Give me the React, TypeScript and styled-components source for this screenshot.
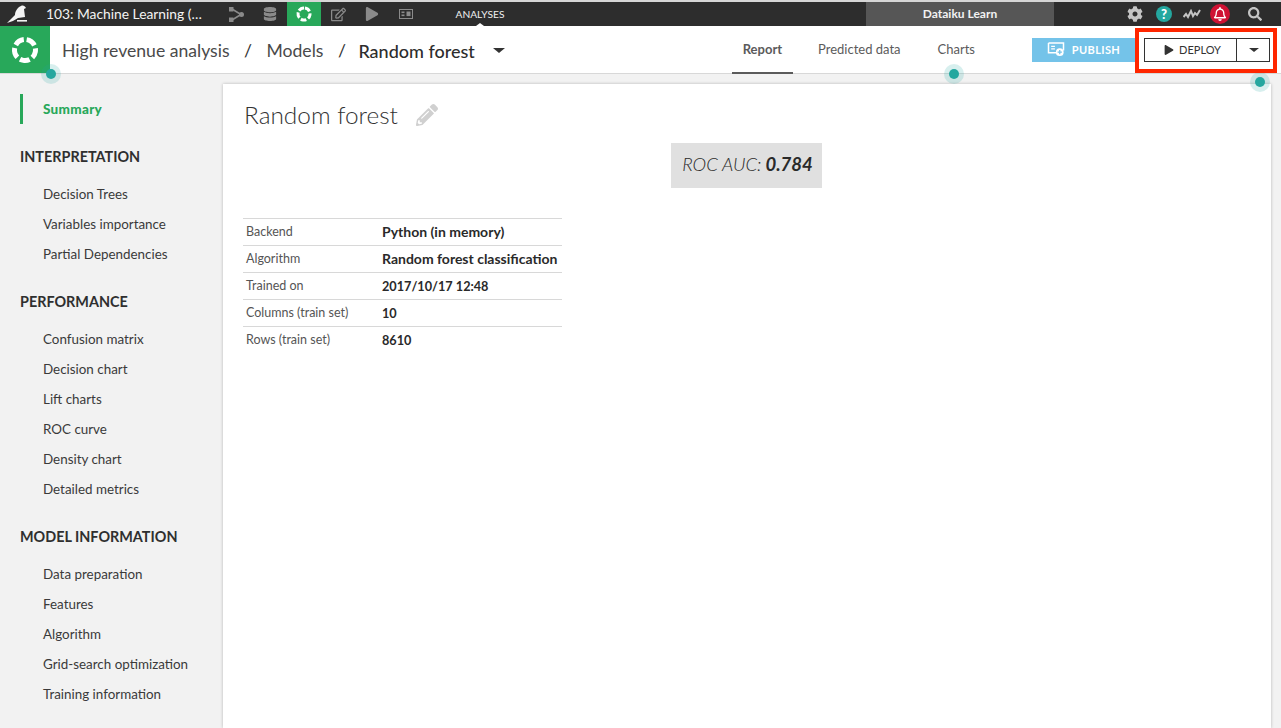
import React from "react";
import styled, { createGlobalStyle } from "styled-components";
import {
	FaCog,
	FaDatabase,
	FaPencilAlt,
	FaPlay,
	FaRegBell,
	FaRegEdit,
	FaSearch,
} from "react-icons/fa";

const GREEN = "#28a85a";
const TEAL = "#24a79f";
const TEXT = "#333333";

const GlobalStyle = createGlobalStyle`
  html, body {
    margin: 0;
    padding: 0;
    height: 100%;
    overflow: hidden;
    background: #f2f2f2;
    font-family: "Lato", "Noto Sans", sans-serif;
    color: ${TEXT};
  }
`;

const Page = styled.div`
  position: relative;
  width: 1281px;
  height: 728px;
  display: flex;
  flex-direction: column;
  overflow: hidden;
  border-top: 2px solid #d6d6d6;
  box-sizing: border-box;
`;

const TopBar = styled.div`
  height: 24px;
  flex: none;
  background: #2d2d2d;
  display: flex;
  align-items: stretch;
  color: #fff;
`;

const Bird = styled.div`
  width: 46px;
  display: flex;
  align-items: center;
  padding-left: 6px;
  box-sizing: border-box;
`;

const ProjectTitle = styled.div`
  width: 173px;
  font-size: 13.8px;
  line-height: 24px;
  white-space: nowrap;
  color: #f4f4f4;
`;

const NavIcon = styled.div<{ $active?: boolean }>`
  width: 34px;
  display: flex;
  align-items: center;
  justify-content: center;
  color: #8a8a8a;
  background: ${(p) => (p.$active ? GREEN : "transparent")};
`;

const NavLabel = styled.div`
  position: relative;
  width: 114px;
  text-align: center;
  font-size: 10.2px;
  line-height: 24px;
  color: #f0f0f0;

  &::after {
    content: "";
    position: absolute;
    left: 53px;
    bottom: 0;
    border-left: 4px solid transparent;
    border-right: 4px solid transparent;
    border-bottom: 3px solid #fff;
  }
`;

const InstanceName = styled.div`
  width: 188px;
  margin-left: 329px;
  background: #565656;
  text-align: center;
  font-size: 12px;
  font-weight: 700;
  line-height: 24px;
  color: #f2f2f2;
`;

const TopActions = styled.div`
  flex: 1;
  display: flex;
  align-items: center;
  color: #c4c4c4;
  padding-left: 73px;
`;

const ActionSlot = styled.div<{ $width: number }>`
  width: ${(p) => p.$width}px;
  display: flex;
  justify-content: center;
  align-items: center;

  svg {
    flex: none;
  }
`;

const HelpBadge = styled.div`
  width: 16px;
  height: 16px;
  border-radius: 50%;
  background: ${TEAL};
  color: #fff;
  font-size: 13px;
  font-weight: 900;
  line-height: 16px;
  text-align: center;
`;

const BellBadge = styled.div`
  width: 20px;
  height: 20px;
  border-radius: 50%;
  background: #cf1233;
  color: #fff;
  display: flex;
  align-items: center;
  justify-content: center;
`;

const SubHeader = styled.div`
  height: 47px;
  flex: none;
  background: #fff;
  border-bottom: 1px solid #d8d8d8;
  display: flex;
  align-items: stretch;
`;

const AppBadge = styled.div`
  width: 50px;
  background: ${GREEN};
  display: flex;
  align-items: center;
  justify-content: center;
`;

const Breadcrumb = styled.div`
  display: flex;
  align-items: center;
  margin-left: 12px;
  padding-top: 2px;
  font-size: 17.6px;
  color: #4a4a4a;
  white-space: nowrap;
`;

const Slash = styled.span`
  margin: 0 14.5px;
  color: #333;
`;

const CurrentCrumb = styled.span`
  margin-left: -2px;
  color: #2d2d2d;
  font-size: 18px;
  font-weight: 500;
`;

const Caret = styled.span<{ $size: number; $color: string }>`
  display: inline-block;
  border-left: ${(p) => p.$size}px solid transparent;
  border-right: ${(p) => p.$size}px solid transparent;
  border-top: ${(p) => p.$size - 1}px solid ${(p) => p.$color};
`;

const BreadcrumbCaret = styled.span`
  display: flex;
  margin-left: 18px;
`;

const SubHeaderRight = styled.div`
  margin-left: auto;
  display: flex;
  align-items: center;
  padding-right: 11px;
  height: 100%;
`;

const Tabs = styled.div`
  display: flex;
  height: 100%;
  gap: 13px;
  margin-right: 45px;
`;

const Tab = styled.div<{ $active?: boolean }>`
  padding: 0 ${(p) => (p.$active ? 11 : 12)}px;
  justify-content: center;
  display: flex;
  align-items: center;
  font-size: 13px;
  font-weight: ${(p) => (p.$active ? 700 : 400)};
  color: #5b5b5b;
  border-bottom: 2px solid ${(p) => (p.$active ? "#5b5b5b" : "transparent")};
  box-sizing: border-box;
  height: 48px;
`;

const PublishButton = styled.div`
  width: 103px;
  height: 24px;
  background: #74c3e9;
  color: #fff;
  display: flex;
  align-items: center;
  justify-content: center;
  gap: 7px;
  font-size: 11px;
  font-weight: 700;
  letter-spacing: 0.4px;
  margin-right: 9px;
`;

const DeployGroup = styled.div`
  width: 126px;
  height: 24px;
  box-sizing: border-box;
  border: 1px solid #333;
  display: flex;
`;

const DeployMain = styled.div`
  flex: 1;
  display: flex;
  align-items: center;
  justify-content: center;
  gap: 5px;
  padding-left: 4px;
  font-size: 11px;
  color: #333;
  border-right: 1px solid #333;
`;

const DeployCaret = styled.div`
  width: 32px;
  padding-left: 1px;
  box-sizing: border-box;
  display: flex;
  align-items: center;
  justify-content: center;
`;

const Body = styled.div`
  flex: 1;
  display: flex;
  min-height: 0;
`;

const Sidebar = styled.div`
  width: 222px;
  flex: none;
  padding: 20px 0 0 20px;
  box-sizing: border-box;
`;

const SummaryLink = styled.div`
  border-left: 3px solid ${GREEN};
  padding-left: 20px;
  height: 30px;
  line-height: 30px;
  font-size: 13.5px;
  font-weight: 900;
  letter-spacing: 0.3px;
  color: ${GREEN};
`;

const SectionTitle = styled.div`
  font-size: 14.4px;
  font-weight: 700;
  line-height: 20px;
  margin: 23px 0 12px;
  color: #2f2f2f;
  white-space: nowrap;
`;

const SideItem = styled.div`
  padding-left: 23px;
  font-size: 13.4px;
  line-height: 30px;
  color: #3a3a3a;
  white-space: nowrap;
`;

const SideGroup = styled.div`
  margin-bottom: 15px;
`;

const Card = styled.div`
  flex: 1;
  margin: 10px 10px 0 1px;
  background: #fff;
  box-shadow: 0 0 3px rgba(0, 0, 0, 0.25);
  padding: 0 22px 0 21px;
  box-sizing: border-box;
`;

const TitleRow = styled.div`
  display: flex;
  align-items: center;
  height: 32px;
  margin-top: 15px;
  gap: 18px;
  color: #d0d0d0;
`;

const Title = styled.h1`
  margin: 0;
  font-size: 24.4px;
  font-weight: 300;
  color: #333;
  line-height: 32px;
`;

const MetricRow = styled.div`
  display: flex;
  justify-content: center;
  margin-top: 12px;
`;

const MetricBox = styled.div`
  width: 151px;
  height: 45px;
  padding: 0 0 3px 2px;
  box-sizing: border-box;
  background: #e0e0e0;
  display: flex;
  align-items: center;
  justify-content: center;
  gap: 4px;
  font-size: 18.5px;
  font-style: italic;
  font-weight: 300;
  color: #2a2a2a;
  white-space: nowrap;
`;

const MetricValue = styled.b`
  font-weight: 700;
`;

const InfoTable = styled.table`
  border-collapse: collapse;
  margin-top: 30px;
  width: 319px;
  margin-left: -1px;
  font-size: 12.5px;

  tr {
    border-top: 1px solid #d8d8d8;
    height: 27px;
  }

  td {
    padding-left: 3px;
    padding-right: 3px;
    white-space: nowrap;
  }
`;

const LabelCell = styled.td`
  width: 130px;
  padding: 0;
  color: #555;
  vertical-align: top;
  line-height: 25px;
`;

const ValueCell = styled.td<{ $numeric: boolean }>`
  padding-top: 0;
  padding-bottom: ${(p) => (p.$numeric ? 0 : 2)}px;
  font-weight: 700;
  color: #2a2a2a;
  font-size: ${(p) => (p.$numeric ? "12.7px" : "14px")};
`;

const PulseDot = styled.div<{ $x: number; $y: number }>`
  position: absolute;
  left: ${(p) => p.$x - 5}px;
  top: ${(p) => p.$y - 7}px;
  width: 10px;
  height: 10px;
  border-radius: 50%;
  background: ${TEAL};
  box-shadow: 0 0 0 5px rgba(36, 167, 159, 0.18);
`;

const Highlight = styled.div`
  position: absolute;
  left: 1135px;
  top: 26px;
  width: 142px;
  height: 45px;
  box-sizing: border-box;
  border: 4px solid #ff2600;
`;

function Ring({ size, r, width }: { size: number; r: number; width: number }) {
	const c = 2 * Math.PI * r;
	return (
		<svg width={size} height={size} viewBox={`0 0 ${size} ${size}`}>
			<circle
				cx={size / 2}
				cy={size / 2}
				r={r}
				fill="none"
				stroke="#fff"
				strokeWidth={width}
				strokeDasharray={`${c / 5 - c * 0.05} ${c * 0.05}`}
				transform={`rotate(-81 ${size / 2} ${size / 2})`}
			/>
		</svg>
	);
}

const sections = [
	{
		title: "INTERPRETATION",
		items: ["Decision Trees", "Variables importance", "Partial Dependencies"],
	},
	{
		title: "PERFORMANCE",
		items: [
			"Confusion matrix",
			"Decision chart",
			"Lift charts",
			"ROC curve",
			"Density chart",
			"Detailed metrics",
		],
	},
	{
		title: "MODEL INFORMATION",
		items: [
			"Data preparation",
			"Features",
			"Algorithm",
			"Grid-search optimization",
			"Training information",
		],
	},
];

const details = [
	["Backend", "Python (in memory)"],
	["Algorithm", "Random forest classification"],
	["Trained on", "2017/10/17 12:48"],
	["Columns (train set)", "10"],
	["Rows (train set)", "8610"],
];

export default function App() {
	return (
		<Page>
			<GlobalStyle />
			<TopBar>
				<Bird>
					<svg width="22" height="22" viewBox="0 0 22 22">
						<path
							d="M1 20 L9 12 C9 8 12 4 15 3 C17 2 19 3 20 5 L18 6 L19 14 L12 15 C9 17 5 19 1 20 Z"
							fill="#f4f4f4"
						/>
						<rect x="11" y="17" width="10" height="1.6" fill="#f4f4f4" />
					</svg>
				</Bird>
				<ProjectTitle>103: Machine Learning (…</ProjectTitle>
				<NavIcon>
					<svg width="15" height="15" viewBox="0 0 15 15" fill="#8a8a8a">
						<rect x="0" y="0" width="4.5" height="4.5" />
						<rect x="0" y="10.5" width="4.5" height="4.5" />
						<circle cx="12.5" cy="7.5" r="2.5" />
						<path
							d="M3 2 L12 7.5 L3 13"
							fill="none"
							stroke="#8a8a8a"
							strokeWidth="1.6"
						/>
					</svg>
				</NavIcon>
				<NavIcon>
					<FaDatabase size={14} />
				</NavIcon>
				<NavIcon $active>
					<Ring size={16} r={6} width={3} />
				</NavIcon>
				<NavIcon>
					<FaRegEdit size={15} />
				</NavIcon>
				<NavIcon>
					<FaPlay size={14} />
				</NavIcon>
				<NavIcon>
					<svg width="14" height="10" viewBox="0 0 14 10">
						<rect
							x="0.5"
							y="0.5"
							width="13"
							height="9"
							fill="none"
							stroke="#8a8a8a"
						/>
						<rect x="2.5" y="2.5" width="3" height="1.6" fill="#8a8a8a" />
						<rect x="2.5" y="5.5" width="3" height="1.6" fill="#8a8a8a" />
						<rect x="7.5" y="2.5" width="4" height="4.6" fill="#8a8a8a" />
					</svg>
				</NavIcon>
				<NavLabel>ANALYSES</NavLabel>
				<InstanceName>Dataiku Learn</InstanceName>
				<TopActions>
					<ActionSlot $width={16}>
						<FaCog size={16} />
					</ActionSlot>
					<ActionSlot $width={42}>
						<HelpBadge>?</HelpBadge>
					</ActionSlot>
					<ActionSlot $width={14}>
						<svg width="18" height="10" viewBox="0 0 18 10">
							<path
								d="M0.5 8 L3 5 L5 8 L8 2 L10 7 L12 4 L14 6 L17 1"
								fill="none"
								stroke="#c4c4c4"
								strokeWidth="2"
							/>
						</svg>
					</ActionSlot>
					<ActionSlot $width={42}>
						<BellBadge>
							<FaRegBell size={14} />
						</BellBadge>
					</ActionSlot>
					<ActionSlot $width={28}>
						<FaSearch size={14} />
					</ActionSlot>
				</TopActions>
			</TopBar>

			<SubHeader>
				<AppBadge>
					<Ring size={30} r={10.5} width={5} />
				</AppBadge>
				<Breadcrumb>
					<span>High revenue analysis</span>
					<Slash>/</Slash>
					<span>Models</span>
					<Slash>/</Slash>
					<CurrentCrumb>Random forest</CurrentCrumb>
					<BreadcrumbCaret>
						<Caret $size={6} $color="#333" />
					</BreadcrumbCaret>
				</Breadcrumb>
				<SubHeaderRight>
					<Tabs>
						<Tab $active>Report</Tab>
						<Tab>Predicted data</Tab>
						<Tab>Charts</Tab>
					</Tabs>
					<PublishButton>
						<svg width="18" height="15" viewBox="0 0 16 14">
							<path
								d="M1 1 H15 V8 M1 1 V10 H8"
								fill="none"
								stroke="#fff"
								strokeWidth="1.4"
							/>
							<path
								d="M3.5 4 H7 M3.5 6.5 H7"
								stroke="#fff"
								strokeWidth="1.2"
							/>
							<circle cx="11.5" cy="9.5" r="3.6" fill="#fff" />
							<path
								d="M11.5 7.5 V11.5 M9.5 9.5 H13.5"
								stroke="#74c3e9"
								strokeWidth="1.2"
							/>
						</svg>
						PUBLISH
					</PublishButton>
					<DeployGroup>
						<DeployMain>
							<FaPlay size={10} />
							DEPLOY
						</DeployMain>
						<DeployCaret>
							<Caret $size={5} $color="#333" />
						</DeployCaret>
					</DeployGroup>
				</SubHeaderRight>
			</SubHeader>

			<Body>
				<Sidebar>
					<SummaryLink>Summary</SummaryLink>
					{sections.map((section) => (
						<SideGroup key={section.title}>
							<SectionTitle>{section.title}</SectionTitle>
							{section.items.map((item) => (
								<SideItem key={item}>{item}</SideItem>
							))}
						</SideGroup>
					))}
				</Sidebar>
				<Card>
					<TitleRow>
						<Title>Random forest</Title>
						<FaPencilAlt size={22} />
					</TitleRow>
					<MetricRow>
						<MetricBox>
							ROC AUC: <MetricValue>0.784</MetricValue>
						</MetricBox>
					</MetricRow>
					<InfoTable>
						<tbody>
							{details.map(([label, value]) => (
								<tr key={label}>
									<LabelCell>{label}</LabelCell>
									<ValueCell $numeric={/^[\d/: ]+$/.test(value)}>{value}</ValueCell>
								</tr>
							))}
						</tbody>
					</InfoTable>
				</Card>
			</Body>

			<PulseDot $x={51} $y={74} />
			<PulseDot $x={954} $y={74} />
			<PulseDot $x={1260} $y={82} />
			<Highlight />
		</Page>
	);
}
